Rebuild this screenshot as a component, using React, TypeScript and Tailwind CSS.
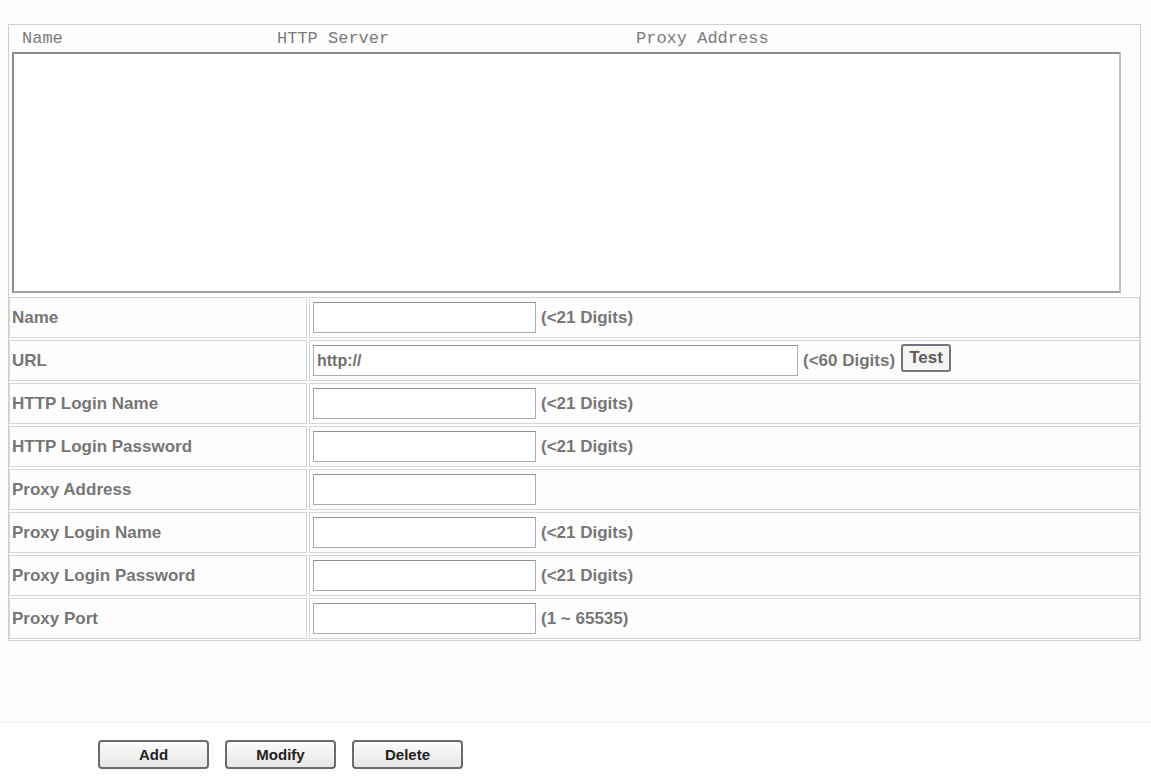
const rows: { label: string; wide?: boolean; hint?: string; test?: boolean }[] = [
  { label: "Name", hint: "(<21 Digits)" },
  { label: "URL", wide: true, hint: "(<60 Digits)", test: true },
  { label: "HTTP Login Name", hint: "(<21 Digits)" },
  { label: "HTTP Login Password", hint: "(<21 Digits)" },
  { label: "Proxy Address" },
  { label: "Proxy Login Name", hint: "(<21 Digits)" },
  { label: "Proxy Login Password", hint: "(<21 Digits)" },
  { label: "Proxy Port", hint: "(1 ~ 65535)" },
];

function FieldRow({ label, wide, hint, test }: (typeof rows)[number]) {
  return (
    <div className="flex gap-[2px] h-[41px]">
      <div className="w-[298px] shrink-0 border border-[#d6d6d6] flex items-center pl-[2px] text-[17px] font-bold text-[#767676]">
        {label}
      </div>
      <div className="flex-1 border border-[#d6d6d6] flex items-center pl-[3px]">
        <input
          defaultValue={wide ? "http://" : ""}
          className={`${wide ? "w-[485px]" : "w-[223px]"} h-[31px] border border-[#a9adb2] border-t-[#8e9296] bg-white px-[3px] text-[16px] font-bold text-[#707070] outline-none`}
        />
        {hint && <span className="ml-[5px] text-[17px] font-bold text-[#767676]">{hint}</span>}
        {test && (
          <button className="ml-[6px] w-[50px] h-[28px] -mt-[6px] border-2 border-[#6f7680] rounded-[3px] bg-[#f5f5f3] text-[17px] font-bold text-[#5a5a5a] leading-none">
            Test
          </button>
        )}
      </div>
    </div>
  );
}

export default function App() {
  return (
    <div className="w-[1151px] h-[776px] bg-[#fdfdfb] overflow-hidden" style={{ fontFamily: '"Liberation Sans", Arial, sans-serif' }}>
      <div className="pt-[24px] pl-[8px] h-[722px]">
        <div className="w-[1133px] border border-[#cfcfcf] bg-[#fefefe]">
          <div className="h-[27px] flex items-center text-[17px] text-[#7a7a7a]" style={{ fontFamily: '"Liberation Mono", "Courier New", monospace' }}>
            <span className="ml-[13px] w-[255px]">Name</span>
            <span className="w-[359px]">HTTP Server</span>
            <span>Proxy Address</span>
          </div>
          <div className="ml-[3px] w-[1109px] h-[241px] border-2 border-[#8c8c8c] border-r-[#b9c2c9] border-b-[#a0a0a0] bg-white" />
          <div className="flex flex-col gap-[2px] mt-[4px] pb-[1px]">
            {rows.map((r) => (
              <FieldRow key={r.label} {...r} />
            ))}
          </div>
        </div>
      </div>
      <div className="border-t border-[#f0f0ee] bg-white h-[54px] flex gap-[16px] pl-[98px] pt-[17px]">
        {["Add", "Modify", "Delete"].map((b) => (
          <button
            key={b}
            className="w-[111px] h-[29px] border-2 border-[#6b6b6b] rounded-[4px] bg-gradient-to-b from-[#fbfbfb] to-[#e8e8e6] text-[15px] font-bold text-[#222] leading-none"
          >
            {b}
          </button>
        ))}
      </div>
    </div>
  );
}
